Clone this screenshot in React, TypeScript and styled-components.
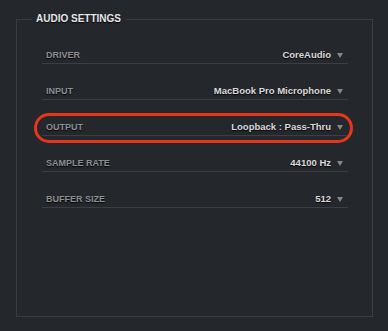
import styled, { createGlobalStyle } from "styled-components";

const GlobalStyle = createGlobalStyle`
  html, body {
    margin: 0;
    padding: 0;
    background: #24272c;
  }
  body {
    width: 388px;
    height: 331px;
    overflow: hidden;
    font-family: "Liberation Sans", Arial, sans-serif;
  }
`;

const Page = styled.div`
  padding: 12px 15px 0 16px;
`;

const Panel = styled.fieldset`
  margin: 0;
  padding: 0 24px 0 25px;
  height: 305px;
  box-sizing: border-box;
  border: 1px solid #3b3e43;
  min-width: 0;
`;

const Legend = styled.legend`
  margin-left: -10px;
  padding: 0 5px 0 4px;
  font-size: 10px;
  line-height: 14px;
  font-weight: bold;
  color: #e8e8e8;
  text-shadow: 0 1px 1px rgba(0, 0, 0, 0.9);
`;

const Rows = styled.div`
  display: flex;
  flex-direction: column;
  padding-top: 2px;
`;

const Row = styled.div`
  position: relative;
  display: flex;
  align-items: flex-end;
  justify-content: space-between;
  height: 33px;
  padding: 0 5px 2px 4px;
  border-bottom: 1px solid #3b3e43;
  text-shadow: 0 1px 1px rgba(0, 0, 0, 0.9);
`;

const Label = styled.span`
  font-size: 9px;
  line-height: 12px;
  font-weight: bold;
  color: #8e9094;
`;

const Value = styled.span`
  display: flex;
  align-items: center;
  gap: 6px;
  font-size: 9.5px;
  line-height: 12px;
  font-weight: bold;
  color: #dadada;
`;

const Arrow = styled.span`
  width: 0;
  height: 0;
  border-left: 3.5px solid transparent;
  border-right: 3.5px solid transparent;
  border-top: 5px solid #85878a;
  margin-top: 1px;
`;

const Highlight = styled.div`
  position: absolute;
  left: -8px;
  right: -5px;
  top: 13px;
  height: 30px;
  box-sizing: border-box;
  border: 3px solid #e6361c;
  border-radius: 16px;
  pointer-events: none;
`;

const settings = [
  { label: "DRIVER", value: "CoreAudio" },
  { label: "INPUT", value: "MacBook Pro Microphone" },
  { label: "OUTPUT", value: "Loopback : Pass-Thru", marked: true },
  { label: "SAMPLE RATE", value: "44100 Hz" },
  { label: "BUFFER SIZE", value: "512" },
];

export default function App() {
  return (
    <Page>
      <GlobalStyle />
      <Panel>
        <Legend>AUDIO SETTINGS</Legend>
        <Rows>
          {settings.map((s) => (
            <Row key={s.label}>
              <Label>{s.label}</Label>
              <Value>
                {s.value}
                <Arrow />
              </Value>
              {s.marked && <Highlight />}
            </Row>
          ))}
        </Rows>
      </Panel>
    </Page>
  );
}
